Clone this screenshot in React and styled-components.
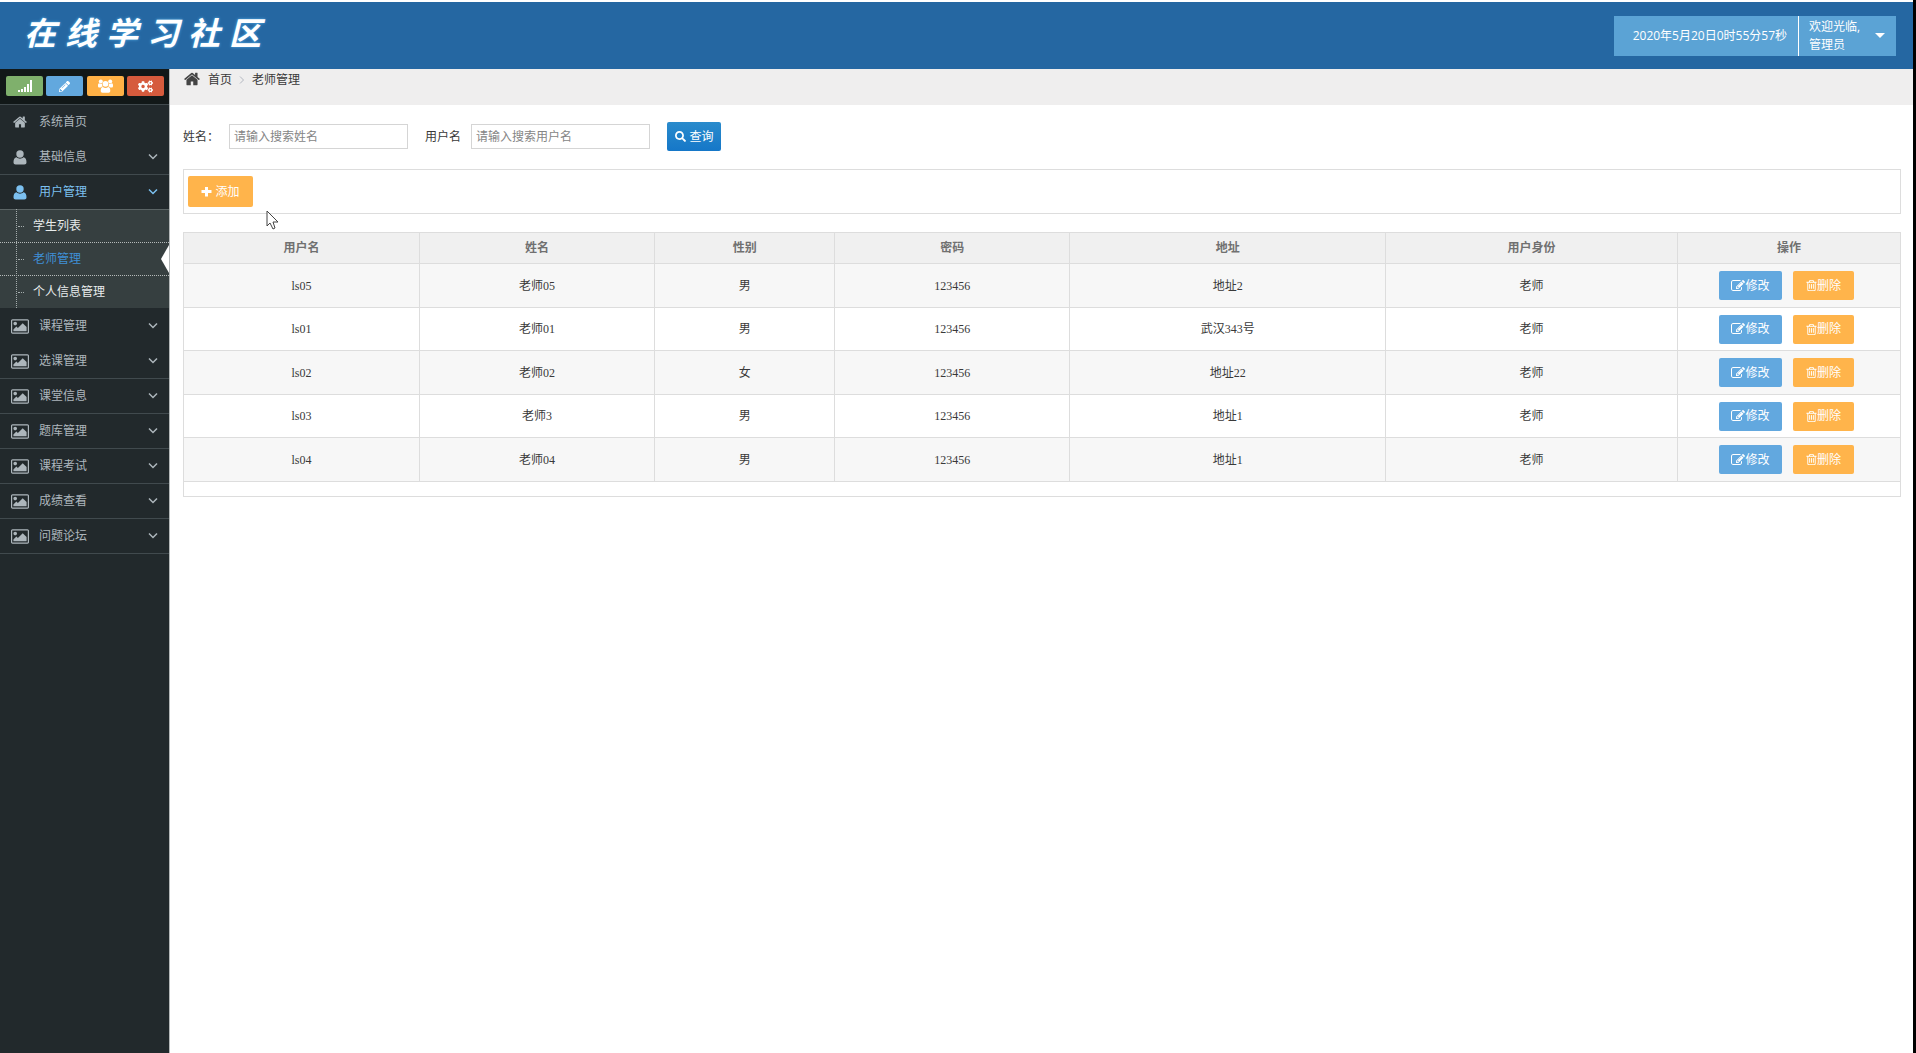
import React, { useState } from "react";
import styled, { createGlobalStyle } from "styled-components";
import { FaCogs, FaPencilAlt, FaSearch } from "react-icons/fa";

const GlobalStyle = createGlobalStyle`
  * {
    box-sizing: border-box;
  }
  body {
    margin: 0;
    background: #fff;
    font-family: "Open Sans", "Noto Sans CJK SC", sans-serif;
    font-size: 12px;
    line-height: 18px;
    color: #393939;
  }
  button, input {
    font-family: inherit;
    font-size: 12px;
    line-height: 18px;
  }
  a {
    color: inherit;
    text-decoration: none;
  }
`;

const Page = styled.div`
  min-height: 100vh;
  display: flex;
  flex-direction: column;
  padding-top: 2px;
  border-right: 3px solid #000;
`;

const Header = styled.header`
  display: flex;
  align-items: center;
  justify-content: space-between;
  height: 67px;
  padding: 0 17px 0 24px;
  background: #2567a2;
`;

const Logo = styled.h1`
  display: flex;
  gap: 9px;
  margin: 0;
  padding-bottom: 6px;
  font-size: 32px;
  line-height: 40px;
  font-weight: 700;
  font-style: italic;
  color: #fff;
  text-shadow: 0 0 3px #58b4ee;
`;

const UserBar = styled.div`
  display: flex;
  height: 40px;
  background: #5ba3d5;
  color: #fff;
`;

const Clock = styled.div`
  display: flex;
  align-items: center;
  padding: 0 11px 0 19px;
  border-right: 1px solid #fff;
`;

const UserMenu = styled.button`
  display: flex;
  align-items: center;
  justify-content: space-between;
  width: 97px;
  padding: 0 11px 0 10px;
  border: none;
  background: none;
  color: #fff;
  text-align: left;
  cursor: pointer;
`;

const Caret = styled.span`
  border: 5px solid transparent;
  border-top-color: #fff;
  border-bottom: none;
`;

const Body = styled.div`
  flex: 1;
  display: flex;
`;

const Sidebar = styled.aside`
  width: 170px;
  flex-shrink: 0;
  background: #22292c;
  border-right: 1px solid #b4b8b9;
`;

const Shortcuts = styled.div`
  display: flex;
  justify-content: space-between;
  padding: 7px 5px 8px 6px;
  background: #121818;
`;

const Shortcut = styled.button`
  display: flex;
  align-items: center;
  justify-content: center;
  width: 37px;
  height: 20px;
  padding: 0;
  border: none;
  border-radius: 2px;
  background: ${(props) => props.$color};
  color: #fff;
  cursor: pointer;
`;

const NavItem = styled.a`
  display: flex;
  align-items: center;
  height: 35px;
  padding: 0 11px 0 10px;
  border-top: 1px solid ${(props) => (props.$line ? "#414a4e" : "transparent")};
  color: ${(props) => (props.$open ? "#7cc0f0" : "#adb6bc")};
`;

const NavIcon = styled.span`
  display: flex;
  justify-content: center;
  width: 19px;
  margin-right: 10px;
`;

const NavText = styled.span`
  flex: 1;
`;

const NavEnd = styled.div`
  border-top: 1px solid #414a4e;
`;

const SubMenu = styled.div`
  position: relative;
  background: #363f40;
`;

const TreeLine = styled.span`
  position: absolute;
  top: 0;
  bottom: 0;
  left: 16px;
  border-left: 1px dotted #a5adad;
`;

const SubItem = styled.a`
  position: relative;
  display: flex;
  align-items: center;
  height: 33px;
  padding-left: 18px;
  border-top: 1px solid #5b6465;
  color: ${(props) => (props.$active ? "#3f8fd6" : "#e8ecec")};

  & + & {
    border-top: 1px dotted #b5baba;
  }

  &::before {
    content: "";
    width: 6px;
    margin-right: 9px;
    border-top: 1px dotted #a5adad;
  }
`;

const ActiveMark = styled.span`
  position: absolute;
  right: 0;
  top: 2px;
  border: 14px solid transparent;
  border-left: none;
  border-right: 8px solid #fff;
`;

const Main = styled.main`
  flex: 1;
  min-width: 0;
`;

const Breadcrumb = styled.nav`
  display: flex;
  align-items: flex-start;
  height: 36px;
  padding: 2px 14px;
  background: #efeeee;
`;

const HomeMark = styled.span`
  display: flex;
  margin-right: 8px;
  color: #444;
`;

const CrumbArrow = styled.span`
  display: flex;
  justify-content: center;
  align-items: center;
  width: 20px;
  height: 18px;
  color: #b2b6bf;
`;

const Content = styled.div`
  padding: 0 12px 0 13px;
`;

const SearchForm = styled.form`
  display: flex;
  align-items: center;
  gap: 17px;
  padding: 17px 0 18px;
`;

const Field = styled.div`
  display: flex;
  align-items: center;
  gap: 10px;
`;

const TextInput = styled.input`
  width: 179px;
  height: 25px;
  padding: 0 4px;
  border: 1px solid #d5d5d5;
  background: #fff;
  color: #555;
  outline: none;

  &::placeholder {
    color: #858585;
    opacity: 1;
  }
`;

const Button = styled.button`
  display: inline-flex;
  align-items: center;
  justify-content: center;
  gap: ${(props) => props.$gap || 0}px;
  width: ${(props) => props.$width}px;
  height: ${(props) => props.$height || 29}px;
  padding: 0;
  border: none;
  border-radius: 2px;
  background: ${(props) => props.$color};
  color: #fff;
  cursor: pointer;
`;

const SearchButton = styled(Button)`
  background: linear-gradient(#2a8bcc, #1577c8);
`;

const Toolbar = styled.div`
  display: flex;
  padding: 6px 4px;
  margin-bottom: 18px;
  border: 1px solid #ddd;
`;

const TableBox = styled.div`
  padding-bottom: 14px;
  border: 1px solid #ddd;
`;

const Table = styled.table`
  width: 100%;
  table-layout: fixed;
  border-collapse: separate;
  border-spacing: 0;
  text-align: center;

  th, td {
    padding: 0;
    border-bottom: 1px solid #ddd;
    vertical-align: middle;
  }
  th + th, td + td {
    border-left: 1px solid #ddd;
  }
`;

const HeadCell = styled.th`
  width: ${(props) => props.$width};
  height: 31px;
  background: #f0f0f0;
  color: #707070;
  font-weight: 700;
`;

const Row = styled.tr`
  height: 43px;
  font-family: "Liberation Serif", "Noto Sans CJK SC", serif;

  &:nth-child(odd) {
    height: 44px;
    background: #f7f7f7;
  }
`;

const Actions = styled.div`
  display: flex;
  justify-content: center;
  gap: 11px;
  padding-right: 5px;
  font-family: "Open Sans", "Noto Sans CJK SC", sans-serif;
`;

const Pointer = styled.svg`
  position: absolute;
  left: 266px;
  top: 210px;
  pointer-events: none;
`;

const HomeIcon = ({ size }) => (
  <svg width={size} height={size} viewBox="64 160 1664 1472" fill="currentColor">
    <path d="M1472 992v480q0 26-19 45t-45 19h-384v-384h-256v384h-384q-26 0-45-19t-19-45v-480q0-1 .5-3t.5-3l575-474 575 474q1 2 1 6zm223-69l-62 74q-8 9-21 11h-3q-13 0-21-7l-692-577-692 577q-12 8-24 7-13-2-21-11l-62-74q-8-10-7-23.5t11-21.5l719-599q32-26 76-26t76 26l244 204v-195q0-14 9-23t23-9h192q14 0 23 9t9 23v408l219 182q10 8 11 21.5t-7 23.5z" />
  </svg>
);

const UserIcon = () => (
  <svg width="14" height="15" viewBox="0 0 14 15" fill="currentColor">
    <circle cx="7" cy="4" r="3.7" />
    <path d="M.5 12.3C.5 9.500 1.500 7.500 3.600 7.300c1 1 2.100 1.400 3.400 1.400s2.400-.4 3.400-1.400c2.100.2 3.100 2.200 3.100 5 0 1.400-.9 2.200-2.200 2.200H2.700C1.400 14.500.5 13.700.5 12.300z" />
  </svg>
);

const UsersIcon = () => (
  <svg width="15" height="14" viewBox="0 0 15 14" fill="currentColor">
    <circle cx="2.800" cy="2.600" r="2" />
    <circle cx="12.200" cy="2.600" r="2" />
    <circle cx="7.500" cy="4.800" r="2.900" />
    <path d="M0 6.300C0 5 .4 4.200 1.200 4.200c.8.600 1.800.8 2.700.6 0 1.200.3 2 .9 2.700-.8 0-1.600.4-2.100 1H1.500C.6 8.500 0 8 0 7zM15 6.300c0-1.300-.4-2.100-1.200-2.100-.8.600-1.800.8-2.700.6 0 1.200-.3 2-.9 2.700.8 0 1.600.4 2.100 1h1.200c.9 0 1.500-.5 1.500-1.500z" />
    <path d="M2.700 11.800c0-2.200.8-3.700 2.200-3.800 1.600 1.200 3.600 1.200 5.200 0 1.400.1 2.200 1.600 2.200 3.800 0 1.200-.7 1.900-1.700 1.900H4.400c-1 0-1.700-.7-1.700-1.900z" />
  </svg>
);

const PictureIcon = () => (
  <svg width="18" height="17" viewBox="-64 0 1920 1792" fill="currentColor">
    <path d="M576 576q0 80-56 136t-136 56-136-56-56-136 56-136 136-56 136 56 56 136zm1024 384v448h-1408v-192l320-320 160 160 512-512zm96-704h-1600q-13 0-22.5 9.5t-9.5 22.5v1216q0 13 9.5 22.5t22.5 9.5h1600q13 0 22.5-9.5t9.5-22.5v-1216q0-13-9.5-22.5t-22.5-9.5zm160 32v1216q0 66-47 113t-113 47h-1600q-66 0-113-47t-47-113v-1216q0-66 47-113t113-47h1600q66 0 113 47t47 113z" />
  </svg>
);

const SignalIcon = () => (
  <svg width="14" height="12" viewBox="0 0 14 12" fill="currentColor">
    <path d="M0 10h2v2H0zM3 9h2v3H3zM6 7h2v5H6zM9 4h2v8H9zM12 0h2v12h-2z" />
  </svg>
);

const ArrowDown = () => (
  <svg width="10" height="8" viewBox="0 0 10 8" fill="none" stroke="currentColor" strokeWidth="1.5">
    <path d="M1 1.500l4 4 4-4" />
  </svg>
);

const ArrowRight = () => (
  <svg width="6" height="8" viewBox="0 0 6 8" fill="none" stroke="currentColor">
    <path d="M1 .5L4.500 4 1 7.500" />
  </svg>
);

const PlusIcon = () => (
  <svg width="11" height="11" viewBox="0 0 11 11" fill="currentColor">
    <path d="M4 1h3v3h3.500v3H7v3.500H4V7H.5V4H4z" />
  </svg>
);

const EditIcon = () => (
  <svg width="14" height="14" viewBox="0 0 1792 1792" fill="currentColor">
    <path d="M888 1184l116-116-152-152-116 116v56h96v96h56zm440-720q-16-16-33 1l-350 350q-17 17-1 33t33-1l350-350q17-17 1-33zm80 594v190q0 119-84.5 203.5t-203.5 84.5h-832q-119 0-203.5-84.5t-84.5-203.5v-832q0-119 84.5-203.5t203.5-84.5h832q63 0 117 25 15 7 18 23 3 17-9 29l-49 49q-14 14-32 8-23-6-45-6h-832q-66 0-113 47t-47 113v832q0 66 47 113t113 47h832q66 0 113-47t47-113v-126q0-13 9-22l64-64q15-15 35-7t20 29zm-96-738l288 288-672 672h-288v-288zm444 132l-92 92-288-288 92-92q28-28 68-28t68 28l152 152q28 28 28 68t-28 68z" />
  </svg>
);

const TrashIcon = () => (
  <svg width="11" height="13" viewBox="192 0 1408 1792" fill="currentColor">
    <path d="M704 736v576q0 14-9 23t-23 9h-64q-14 0-23-9t-9-23v-576q0-14 9-23t23-9h64q14 0 23 9t9 23zm256 0v576q0 14-9 23t-23 9h-64q-14 0-23-9t-9-23v-576q0-14 9-23t23-9h64q14 0 23 9t9 23zm256 0v576q0 14-9 23t-23 9h-64q-14 0-23-9t-9-23v-576q0-14 9-23t23-9h64q14 0 23 9t9 23zm128 724v-948h-896v948q0 22 7 40.5t14.5 27 10.5 8.5h832q3 0 10.5-8.5t14.5-27 7-40.5zm-672-1076h448l-48-117q-7-9-17-11h-317q-10 2-17 11zm928 32v64q0 14-9 23t-23 9h-96v948q0 83-47 143.5t-113 60.5h-832q-66 0-113-58.5t-47-141.5v-952h-96q-14 0-23-9t-9-23v-64q0-14 9-23t23-9h309l70-167q15-37 54-63t79-26h320q40 0 79 26t54 63l70 167h309q14 0 23 9t9 23z" />
  </svg>
);

const columns = [
    { title: "用户名", width: "13.7%" },
    { title: "姓名", width: "13.7%" },
    { title: "性别", width: "10.5%" },
    { title: "密码", width: "13.7%" },
    { title: "地址", width: "18.4%" },
    { title: "用户身份", width: "17%" },
    { title: "操作", width: "13%" },
];

const teachers = [
    { user: "ls05", name: "老师05", sex: "男", password: "123456", address: "地址2" },
    { user: "ls01", name: "老师01", sex: "男", password: "123456", address: "武汉343号" },
    { user: "ls02", name: "老师02", sex: "女", password: "123456", address: "地址22" },
    { user: "ls03", name: "老师3", sex: "男", password: "123456", address: "地址1" },
    { user: "ls04", name: "老师04", sex: "男", password: "123456", address: "地址1" },
];

const subPages = ["学生列表", "老师管理", "个人信息管理"];

const modules = ["课程管理", "选课管理", "课堂信息", "题库管理", "课程考试", "成绩查看", "问题论坛"];

export default function App() {
    const [name, setName] = useState("");
    const [user, setUser] = useState("");

    const search = (e) => {
        e.preventDefault();
    };

    return (
        <Page>
            <GlobalStyle />
            <Header>
                <Logo>
                    {[..."在线学习社区"].map((char) => (
                        <span key={char}>{char}</span>
                    ))}
                </Logo>
                <UserBar>
                    <Clock>2020年5月20日0时55分57秒</Clock>
                    <UserMenu>
                        <span>
                            欢迎光临,
                            <br />
                            管理员
                        </span>
                        <Caret />
                    </UserMenu>
                </UserBar>
            </Header>
            <Body>
                <Sidebar>
                    <Shortcuts>
                        <Shortcut $color="#7fb06c" aria-label="统计"><SignalIcon /></Shortcut>
                        <Shortcut $color="#62a8de" aria-label="编辑"><FaPencilAlt size={11} /></Shortcut>
                        <Shortcut $color="#ffb146" aria-label="用户"><UsersIcon /></Shortcut>
                        <Shortcut $color="#d65b3d" aria-label="设置"><FaCogs size={15} /></Shortcut>
                    </Shortcuts>
                    <nav>
                        <NavItem href="#" $line>
                            <NavIcon><HomeIcon size={14} /></NavIcon>
                            <NavText>系统首页</NavText>
                        </NavItem>
                        <NavItem href="#">
                            <NavIcon><UserIcon /></NavIcon>
                            <NavText>基础信息</NavText>
                            <ArrowDown />
                        </NavItem>
                        <NavItem href="#" $line $open>
                            <NavIcon><UserIcon /></NavIcon>
                            <NavText>用户管理</NavText>
                            <ArrowDown />
                        </NavItem>
                        <SubMenu>
                            {subPages.map((title) => (
                                <SubItem href="#" key={title} $active={title === "老师管理"}>
                                    {title}
                                    {title === "老师管理" && <ActiveMark />}
                                </SubItem>
                            ))}
                            <TreeLine />
                        </SubMenu>
                        {modules.map((title, i) => (
                            <NavItem href="#" key={title} $line={i > 1}>
                                <NavIcon><PictureIcon /></NavIcon>
                                <NavText>{title}</NavText>
                                <ArrowDown />
                            </NavItem>
                        ))}
                        <NavEnd />
                    </nav>
                </Sidebar>
                <Main>
                    <Breadcrumb>
                        <HomeMark><HomeIcon size={16} /></HomeMark>
                        <a href="#">首页</a>
                        <CrumbArrow><ArrowRight /></CrumbArrow>
                        <a href="#">老师管理</a>
                    </Breadcrumb>
                    <Content>
                        <SearchForm onSubmit={search}>
                            <Field>
                                <label htmlFor="name">姓名：</label>
                                <TextInput
                                    placeholder="请输入搜索姓名"
                                    type="text"
                                    id="name"
                                    value={name}
                                    onChange={(e) => setName(e.target.value)}
                                />
                            </Field>
                            <Field>
                                <label htmlFor="user">用户名</label>
                                <TextInput
                                    placeholder="请输入搜索用户名"
                                    type="text"
                                    id="user"
                                    value={user}
                                    onChange={(e) => setUser(e.target.value)}
                                />
                            </Field>
                            <SearchButton type="submit" $width={54} $gap={4}>
                                <FaSearch size={11} />
                                查询
                            </SearchButton>
                        </SearchForm>
                        <Toolbar>
                            <Button $color="#ffb44b" $width={65} $height={31} $gap={3}>
                                <PlusIcon />
                                添加
                            </Button>
                        </Toolbar>
                        <TableBox>
                            <Table>
                                <thead>
                                    <tr>
                                        {columns.map((col) => (
                                            <HeadCell key={col.title} $width={col.width}>{col.title}</HeadCell>
                                        ))}
                                    </tr>
                                </thead>
                                <tbody>
                                    {teachers.map((item) => (
                                        <Row key={item.user}>
                                            <td>{item.user}</td>
                                            <td>{item.name}</td>
                                            <td>{item.sex}</td>
                                            <td>{item.password}</td>
                                            <td>{item.address}</td>
                                            <td>老师</td>
                                            <td>
                                                <Actions>
                                                    <Button $color="#62a8df" $width={63}>
                                                        <EditIcon />
                                                        修改
                                                    </Button>
                                                    <Button $color="#ffb44b" $width={61}>
                                                        <TrashIcon />
                                                        删除
                                                    </Button>
                                                </Actions>
                                            </td>
                                        </Row>
                                    ))}
                                </tbody>
                            </Table>
                        </TableBox>
                    </Content>
                </Main>
            </Body>
            <Pointer width="13" height="20" viewBox="0 0 13 20">
                <path d="M1 1v15l3-3 3 6 2-1-2-6h5z" fill="#fff" stroke="#444" strokeWidth="1" />
            </Pointer>
        </Page>
    );
}
